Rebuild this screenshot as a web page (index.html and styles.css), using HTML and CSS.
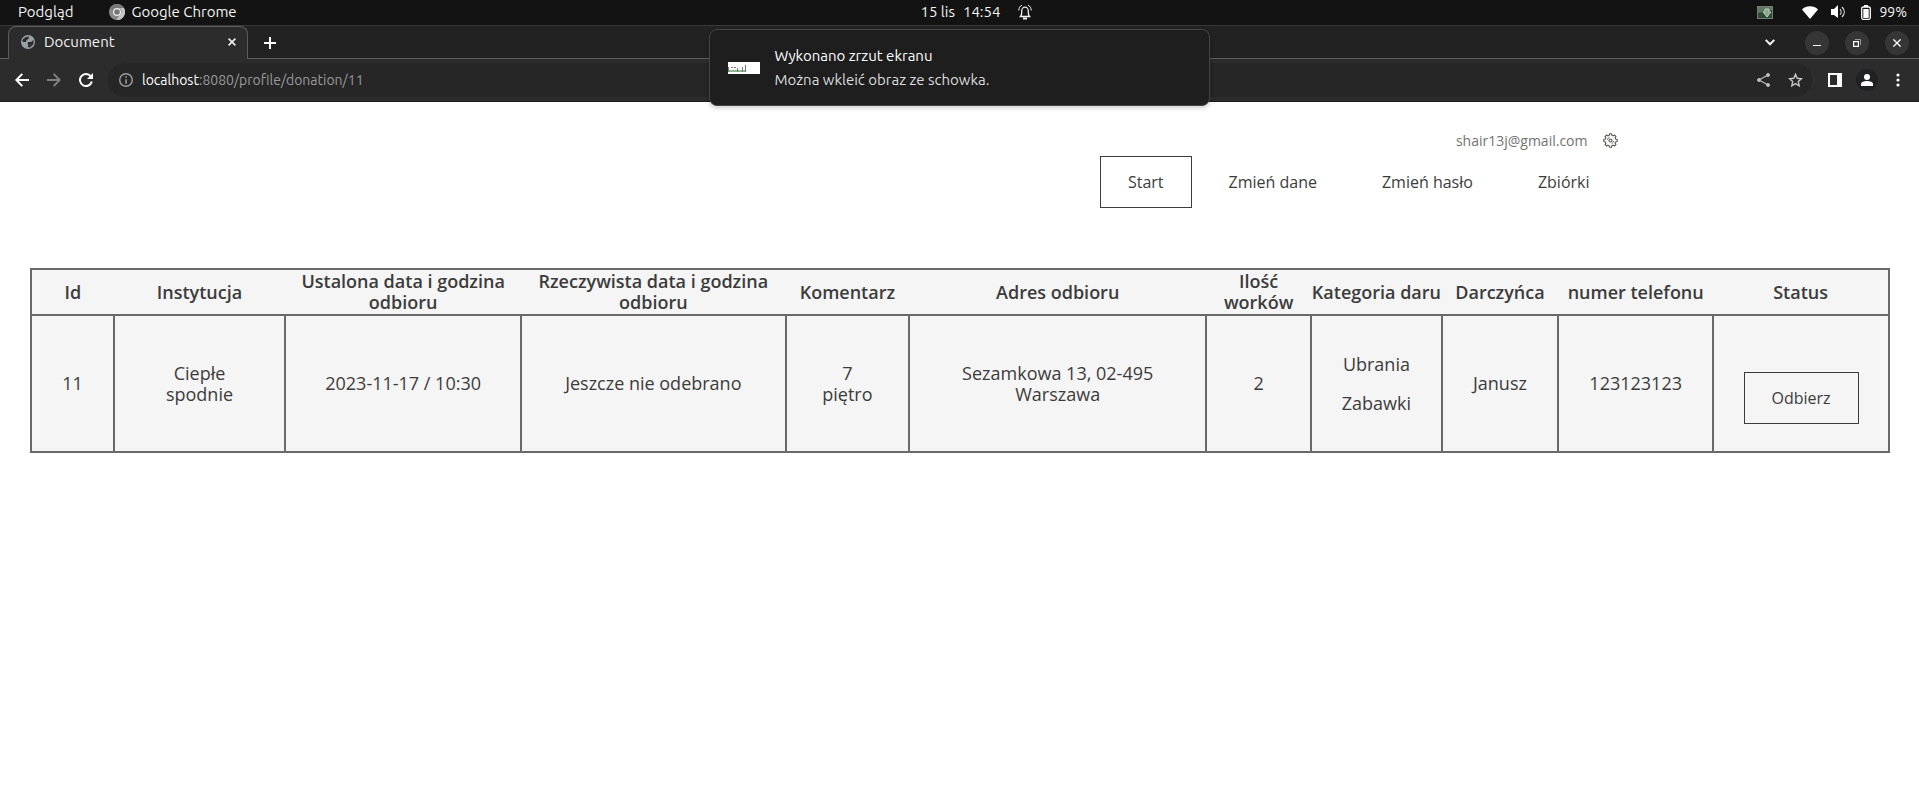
FILE: index.html
```html
<!DOCTYPE html>
<html lang="pl">
<head>
<meta charset="utf-8">
<title>Document</title>
<link rel="stylesheet" href="styles.css">
</head>
<body>
<div class="topbar">
  <div class="topbar-left">
    <span>Podgląd</span>
    <span class="app">
      <svg width="16" height="16" viewBox="0 0 16 16"><circle cx="8" cy="8" r="8" fill="#8a8a8a"/><path d="M8 0a8 8 0 0 1 7 4H8a4 4 0 0 0-4 3L1.200 4A8 8 0 0 1 8 0z" fill="#777"/><path d="M15 4a8 8 0 0 1-7.500 12L11.500 10a4 4 0 0 0-.5-6z" fill="#c4c4c4"/><circle cx="8" cy="8" r="4" fill="#eee"/><circle cx="8" cy="8" r="2.800" fill="#777"/></svg>
      Google Chrome
    </span>
  </div>
  <div class="topbar-center">
    <span>15 lis</span><span>14:54</span>
    <svg class="bell" width="14" height="16" viewBox="0 0 14 16" fill="none" stroke="#f2f2f2"><path d="M2.500 12.500c1.500-1.500 1.200-3 1.200-5.500a3.300 3.800 0 0 1 6.600 0c0 2.500-.3 4 1.200 5.500z" stroke-width="1.300"/><path d="M5 14.500h4" stroke-width="2"/><path d="M4 1.200C2 2 .8 4 .8 6.500M10 1.200c2 .8 3.200 2.800 3.200 5.300"/></svg>
  </div>
  <div class="topbar-right">
    <svg class="tray" width="16" height="13" viewBox="0 0 16 13"><rect x=".5" y=".5" width="15" height="12" fill="#2c4a35" stroke="#747b76"/><path d="M1 1h14v3L1 7z" fill="#5b7a60"/><path d="M8 3h4v3h2l-4 5L6 6h2z" fill="#8ba58c" stroke="#d2dcd1" stroke-width=".8"/></svg>
    <svg class="wifi" width="16" height="13" viewBox="0 0 16 13"><path d="M0 3.500C4-.7 12-.7 16 3.500L8 13z" fill="#fff"/></svg>
    <svg class="volume" width="15" height="14" viewBox="0 0 15 14"><path d="M0 4h3l4-4v13L3 10H0z" fill="#fff"/><path d="M9 4.200c1.500 1.500 1.500 4 0 5.500M11 2c3 3 3 7 0 10" fill="none" stroke="#ddd" stroke-width="1.200"/></svg>
    <svg class="battery" width="10" height="15" viewBox="0 0 10 15"><rect x=".7" y="2" width="8.600" height="12.300" rx="1.500" fill="none" stroke="#fff" stroke-width="1.300"/><path d="M3 0h4v2H3zM2.300 4h5.400v9H2.300z" fill="#fff"/></svg>
    <span>99%</span>
  </div>
</div>

<div class="tabstrip">
  <div class="tab">
    <svg width="14" height="14" viewBox="0 0 14 14"><circle cx="7" cy="7" r="7" fill="#9aa0a6"/><path d="M5 2l3-.6L7.500 4 5.500 5 5 7H2l-.7-1.500A6 6 0 0 1 5 2zM7 7h3l2.500-2v4L9 12.500 6.500 12l1-2-1-1z" fill="#2c2c2c"/></svg>
    <span class="tab-title">Document</span>
    <button class="plain" aria-label="Zamknij kartę"><svg width="8" height="8" viewBox="0 0 8 8" stroke="#eee" stroke-width="1.600"><path d="M.6.6l6.800 6.800M7.400.6L.6 7.400"/></svg></button>
  </div>
  <button class="plain new-tab" aria-label="Nowa karta"><svg width="12" height="12" viewBox="0 0 12 12" stroke="#fff" stroke-width="2"><path d="M6 0v12M0 6h12"/></svg></button>
  <div class="window-controls">
    <button class="plain chevron" aria-label="Szukaj kart"><svg width="10" height="7" viewBox="0 0 10 7" fill="none" stroke="#f2f2f2" stroke-width="2"><path d="M.7.9L5 5.300 9.300.9"/></svg></button>
    <button class="plain round" aria-label="Minimalizuj"><svg width="8" height="8" viewBox="0 0 8 8"><path d="M0 6h8v1H0z" fill="#fff"/></svg></button>
    <button class="plain round" aria-label="Przywróć"><svg width="8" height="8" viewBox="0 0 8 8" fill="none"><path d="M2 .5h5.500V6" stroke="#999"/><path d="M.6 2.600h4.800v4.800H.6z" stroke="#fff" stroke-width="1.200"/></svg></button>
    <button class="plain round" aria-label="Zamknij"><svg width="8" height="8" viewBox="0 0 8 8" stroke="#fff" stroke-width="1.300"><path d="M.4.4l7.200 7.200M7.600.4L.4 7.600"/></svg></button>
  </div>
</div>

<div class="toolbar">
  <button class="plain" aria-label="Wstecz"><svg width="14" height="14" viewBox="0 0 14 14" fill="none" stroke="#fff" stroke-width="2"><path d="M14 7H1.500M7.300.9L1.300 7l6 6.100"/></svg></button>
  <button class="plain" aria-label="Dalej"><svg width="14" height="14" viewBox="0 0 14 14" fill="none" stroke="#808080" stroke-width="2"><path d="M0 7h12.500M6.700.9l6 6.100-6 6.100"/></svg></button>
  <button class="plain" aria-label="Odśwież"><svg width="14" height="14" viewBox="0 0 14 14" fill="none" stroke="#fff" stroke-width="2"><path d="M11.800 3.400A6 6 0 1 0 12.800 8.500"/><path d="M14 0v6H8z" fill="#fff" stroke="none"/></svg></button>
  <div class="omnibox">
    <svg width="14" height="14" viewBox="0 0 14 14"><circle cx="7" cy="7" r="6.300" fill="none" stroke="#9aa0a6" stroke-width="1.400"/><path d="M6.300 3.300h1.500v1.500H6.300zM6.300 6.200h1.500v4.500H6.300z" fill="#9aa0a6"/></svg>
    <span class="url"><b>localhost</b>:8080/profile/donation/11</span>
    <button class="plain" aria-label="Udostępnij"><svg width="13" height="14" viewBox="0 0 13 14" fill="#bdbdbd" stroke="#bdbdbd"><path d="M11 2L2 7l9 5" fill="none" stroke-width="1.200"/><circle cx="11" cy="2" r="1.500"/><circle cx="2" cy="7" r="1.500"/><circle cx="11" cy="12" r="1.500"/></svg></button>
    <button class="plain" aria-label="Zakładka"><svg width="15" height="14" viewBox="0 0 15 14" fill="none" stroke="#c6c6c6" stroke-width="1.400"><path d="M7.500 1.300l1.700 4 4.300.4-3.200 2.900.9 4.200-3.700-2.200-3.700 2.200.9-4.200L1.500 5.700l4.300-.4z"/></svg></button>
  </div>
  <button class="plain side" aria-label="Panel boczny"><svg width="14" height="14" viewBox="0 0 14 14"><path d="M0 0h14v14H0zM2 2v10h7V2z" fill="#fff" fill-rule="evenodd"/></svg></button>
  <button class="plain avatar" aria-label="Profil"><svg width="12" height="12" viewBox="0 0 12 12" fill="#fff"><circle cx="6" cy="3" r="3"/><path d="M0 12v-2c0-2 3-3 6-3s6 1 6 3v2z"/></svg></button>
  <button class="plain" aria-label="Menu"><svg width="4" height="14" viewBox="0 0 4 14" fill="#fff"><circle cx="2" cy="2" r="1.600"/><circle cx="2" cy="7" r="1.600"/><circle cx="2" cy="12" r="1.600"/></svg></button>
</div>

<div class="toast" role="status">
  <svg width="32" height="12" viewBox="0 0 32 12"><path d="M0 0h32v12H0z" fill="#fff"/><path d="M0 8h18v2H0z" fill="#8fba91"/><path d="M0 5h1v5H0zM3 5h2v1H3zM6 5h2v1H6zM9 6h1v4H9zM14 5h1v5h-1zM17 3h1v7h-1z" fill="#777"/></svg>
  <div><p class="toast-title">Wykonano zrzut ekranu</p><p>Można wkleić obraz ze schowka.</p></div>
</div>

<header class="header">
  <div class="user">
    <span>shair13j@gmail.com</span>
    <svg width="15" height="15" viewBox="0 0 16 16" fill="none" stroke="#5d584f" stroke-width="1.200"><path d="M6.500 2.500L7 .8h2l.5 1.700 1.300.6 1.500-.9 1.500 1.500-.9 1.500.6 1.300 1.700.5v2l-1.700.5-.6 1.300.9 1.500-1.500 1.500-1.500-.9-1.300.6-.5 1.700H7l-.5-1.700-1.300-.6-1.500.9-1.500-1.500.9-1.500-.6-1.300L.8 9V7l1.700-.5.6-1.300-.9-1.500 1.500-1.500 1.500.9z"/><circle cx="8" cy="8" r="1.600"/><path d="M4.500 7.500a4 4 0 0 1 2.500-3M11.500 8.500a4 4 0 0 1-2.500 3" stroke-width=".8"/></svg>
  </div>
  <nav class="nav">
    <a class="btn active" href="#">Start</a>
    <a class="btn" href="#">Zmień dane</a>
    <a class="btn" href="#">Zmień hasło</a>
    <a class="btn" href="#">Zbiórki</a>
  </nav>
</header>

<main class="content">
  <table class="donation">
    <colgroup>
      <col class="c-id"><col class="c-inst"><col class="c-plan"><col class="c-real"><col class="c-comment"><col class="c-address"><col class="c-bags"><col class="c-cat"><col class="c-donor"><col class="c-phone"><col class="c-status">
    </colgroup>
    <thead>
      <tr><th>Id</th><th>Instytucja</th><th>Ustalona data i godzina odbioru</th><th>Rzeczywista data i godzina odbioru</th><th>Komentarz</th><th>Adres odbioru</th><th>Ilość worków</th><th>Kategoria daru</th><th>Darczyńca</th><th>numer telefonu</th><th>Status</th></tr>
    </thead>
    <tbody>
      <tr><td>11</td><td>Ciepłe spodnie</td><td>2023-11-17 / 10:30</td><td>Jeszcze nie odebrano</td><td>7 piętro</td><td>Sezamkowa 13, 02-495 Warszawa</td><td>2</td><td class="categories"><p>Ubrania</p><p>Zabawki</p></td><td>Janusz</td><td>123123123</td><td class="status"><button class="btn active">Odbierz</button></td></tr>
    </tbody>
  </table>
</main>
</body>
</html>
```

FILE: styles.css
```css
* { box-sizing: border-box; }
body {
  margin: 0;
  background: #fff;
  color: #3c3c3c;
  font-family: "Open Sans", "Noto Sans", sans-serif;
  font-size: 16px;
}
p { margin: 0; }
svg { display: block; flex: none; }
.plain {
  display: flex;
  align-items: center;
  justify-content: center;
  padding: 0;
  border: 0;
  background: none;
}

.topbar, .tabstrip, .toolbar, .toast {
  font-family: Ubuntu, "Noto Sans", sans-serif;
  font-size: 15px;
  line-height: 24px;
  color: #f2f2f2;
}

/* System bar */
.topbar {
  display: grid;
  grid-template-columns: 1fr auto 1fr;
  align-items: center;
  height: 25px;
  padding: 0 12px 2px 18px;
  background: #131313;
}
.topbar-left, .topbar-right, .topbar-center, .app { display: flex; align-items: center; }
.topbar-left { gap: 36px; }
.app { gap: 6px; }
.topbar-center { gap: 8px; padding-left: 28px; }
.bell { margin-left: 10px; }
.topbar-right { justify-content: flex-end; font-size: 14px; }
.tray { margin-right: 29px; }
.wifi { margin-right: 13px; }
.volume { margin-right: 15px; }
.battery { margin-right: 8px; }

/* Tabs */
.tabstrip {
  display: flex;
  align-items: center;
  height: 34px;
  padding: 0 10px 0 8px;
  background: #222;
  border-top: 1px solid #383838;
  box-shadow: inset 0 -1px #5c5c5c;
}
.tab {
  display: flex;
  align-items: center;
  align-self: stretch;
  gap: 9px;
  width: 240px;
  padding: 0 11px 2px 12px;
  background: #2c2c2c;
  border: 1px solid #5c5c5c;
  border-bottom: 0;
  border-radius: 8px 8px 0 0;
}
.tab-title { flex: 1; }
.new-tab { margin-left: 16px; }
.window-controls { display: flex; align-items: center; gap: 16px; margin-left: auto; }
.chevron { margin-right: 14px; }
.round { width: 24px; height: 24px; border-radius: 50%; background: #363636; }

/* Toolbar */
.toolbar {
  display: flex;
  align-items: center;
  gap: 18px;
  height: 43px;
  padding: 0 19px 0 15px;
  background: #2c2c2c;
  border-bottom: 1px solid #1c1c1c;
  font-size: 14px;
}
.omnibox {
  display: flex;
  flex: 1;
  align-items: center;
  gap: 18px;
  height: 34px;
  margin-left: -3px;
  padding: 0 9px 0 11px;
  border-radius: 17px;
  background: #262626;
}
.url { flex: 1; margin-left: -9px; color: #9a9a9a; }
.url b { font-weight: 400; color: #fff; }
.side { margin-right: -4px; margin-left: -2px; }
.avatar { width: 22px; height: 22px; border-radius: 50%; background: #202124; }

/* Notification */
.toast {
  position: absolute;
  top: 29px;
  left: 50%;
  display: flex;
  align-items: center;
  gap: 15px;
  width: 501px;
  height: 77px;
  margin-left: -251px;
  padding: 0 18px;
  border: 1px solid #454545;
  border-radius: 8px;
  background: #1e1e1e;
  box-shadow: 0 2px 5px rgba(0, 0, 0, .2);
  color: #dcdcdc;
}
.toast-title { color: #fff; }

/* Page header */
.header { max-width: 1316px; margin: 0 auto; padding-top: 28px; }
.user {
  display: flex;
  align-items: center;
  justify-content: flex-end;
  gap: 15px;
  height: 20px;
  font-size: 14px;
  color: #737373;
}
.nav { display: flex; justify-content: flex-end; gap: 9px; margin-top: 6px; }
.btn {
  display: block;
  padding: 14px 27px;
  border: 1px solid transparent;
  background: none;
  font: 16px/22px "Open Sans", "Noto Sans", sans-serif;
  color: #3c3c3c;
  text-decoration: none;
}
.btn.active { border-color: #3c3c3c; }

/* Donation table */
.content { padding: 60px 29px 0 30px; }
.donation {
  width: 100%;
  table-layout: fixed;
  border: 2px solid #696969;
  border-collapse: collapse;
  background: #f5f5f5;
  font-size: 18px;
  line-height: 21px;
  text-align: center;
}
th { padding: 1px 0; font-weight: 600; }
td { height: 137px; padding: 0 30px; border: 2px solid #696969; }
.categories { padding: 0; }
.categories p + p { margin-top: 18px; }
.status { padding: 28px 0 0; }
.status .btn { margin: 0 auto; }
.c-id { width: 4.46%; }
.c-inst { width: 9.22%; }
.c-plan { width: 12.7%; }
.c-real { width: 14.23%; }
.c-comment { width: 6.66%; }
.c-address { width: 15.98%; }
.c-bags { width: 5.65%; }
.c-cat { width: 7.03%; }
.c-donor { width: 6.27%; }
.c-phone { width: 8.34%; }
.c-status { width: 9.46%; }
```
